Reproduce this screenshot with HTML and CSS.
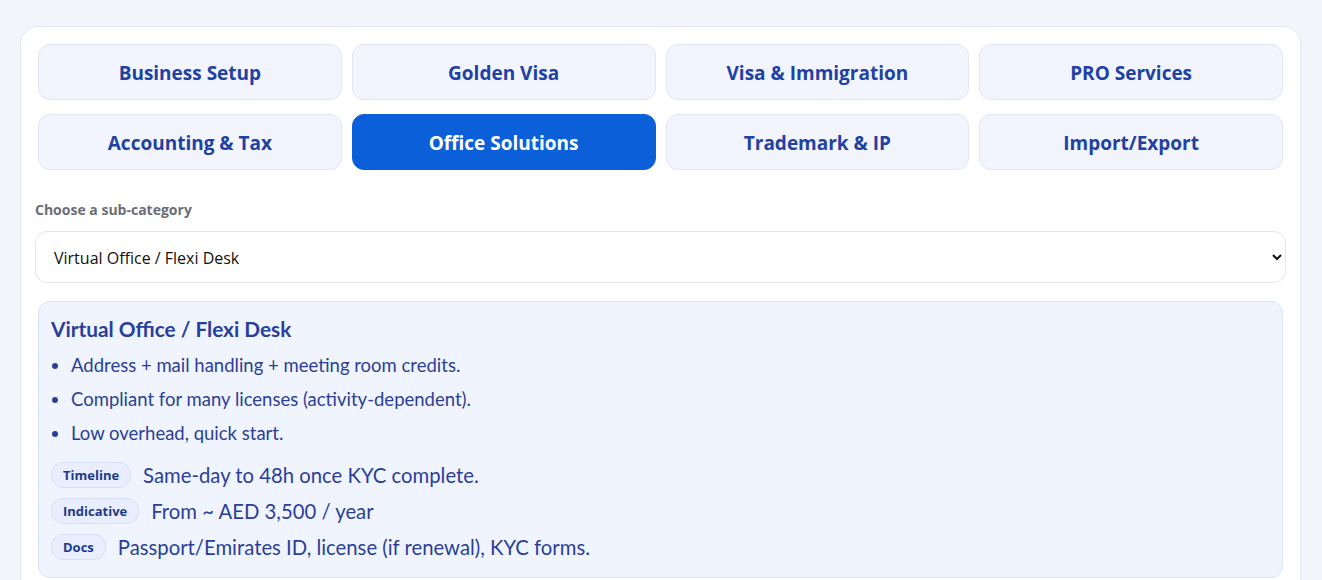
FILE: index.html
```html
<!DOCTYPE html>
<html lang="en">
<head>
    <meta charset="UTF-8">
    <meta name="viewport" content="width=device-width, initial-scale=1.0">
    <title>Services</title>
    <link rel="stylesheet" href="styles.css">
</head>
<body>
    <div class="panel">
        <div class="tabs">
            <button class="tab">Business Setup</button>
            <button class="tab">Golden Visa</button>
            <button class="tab">Visa &amp; Immigration</button>
            <button class="tab">PRO Services</button>
            <button class="tab">Accounting &amp; Tax</button>
            <button class="tab active">Office Solutions</button>
            <button class="tab">Trademark &amp; IP</button>
            <button class="tab">Import/Export</button>
        </div>

        <label class="sub-label" for="subcat">Choose a sub-category</label>
        <select id="subcat" class="sub-select">
            <option>Virtual Office / Flexi Desk</option>
            <option>Serviced Office</option>
            <option>Co-working Space</option>
        </select>

        <div class="info">
            <h3 class="info-title">Virtual Office / Flexi Desk</h3>
            <ul class="info-list">
                <li>Address + mail handling + meeting room credits.</li>
                <li>Compliant for many licenses (activity-dependent).</li>
                <li>Low overhead, quick start.</li>
            </ul>
            <div class="meta">
                <span class="pill">Timeline</span>
                <span>Same-day to 48h once KYC complete.</span>
            </div>
            <div class="meta">
                <span class="pill">Indicative</span>
                <span>From ~ AED 3,500 / year</span>
            </div>
            <div class="meta">
                <span class="pill">Docs</span>
                <span>Passport/Emirates ID, license (if renewal), KYC forms.</span>
            </div>
        </div>
    </div>
</body>
</html>
```

FILE: styles.css
```css
body {
    margin: 0;
    padding: 26px 21px 20px 20px;
    background-color: #f4f5fa;
    font-family: "Open Sans", Arial, sans-serif;
    color: #2b3f98;
}

.panel {
    background: white;
    border: 1px solid #e4e6ee;
    border-radius: 18px;
    padding: 17px 14px 20px;
}

.tabs {
    display: grid;
    grid-template-columns: repeat(4, 1fr);
    gap: 14px 10px;
    margin: 0 3px;
}

.tab {
    height: 56px;
    padding-top: 2px;
    border: 1px solid #e2e6f1;
    border-radius: 12px;
    background: #f2f5fe;
    color: #2141a3;
    font-family: "Open Sans", Arial, sans-serif;
    font-size: 19px;
    font-weight: 700;
    cursor: pointer;
}

.tab.active {
    background: #0b5fd9;
    border-color: #0b5fd9;
    color: white;
}

.sub-label {
    display: block;
    margin-top: 30px;
    font-size: 14px;
    font-weight: 700;
    line-height: 20px;
    color: #6b6e78;
}

.sub-select {
    display: block;
    width: 100%;
    height: 52px;
    margin-top: 11px;
    padding: 1px 12px 0 14px;
    border: 1px solid #e4e6ee;
    border-radius: 12px;
    background: white;
    font-family: "Open Sans", Arial, sans-serif;
    font-size: 16px;
    color: #111;
}

.info {
    margin: 18px 3px 0;
    padding: 13px 12px 12px;
    background: #f0f4fe;
    border: 1px solid #d9e2f7;
    border-radius: 12px;
}

.info-title {
    margin: 0;
    font-family: Lato, sans-serif;
    font-size: 20.8px;
    line-height: 28px;
    font-weight: 700;
    color: #2a3f9a;
}

.info-list {
    margin: 9px 0 11px;
    padding-left: 20px;
    font-family: Lato, sans-serif;
    font-size: 18.5px;
    line-height: 26px;
}

.info-list li {
    margin-bottom: 8px;
}

.meta {
    display: flex;
    align-items: center;
    gap: 12px;
    height: 36px;
    font-family: Lato, sans-serif;
    font-size: 20.3px;
}

.pill {
    padding: 3px 11px;
    border: 1px solid #d6e0f7;
    border-radius: 12px;
    background: #e8eefd;
    font-family: "Open Sans", Arial, sans-serif;
    font-size: 13px;
    font-weight: 700;
    color: #1e3a8a;
}
```
